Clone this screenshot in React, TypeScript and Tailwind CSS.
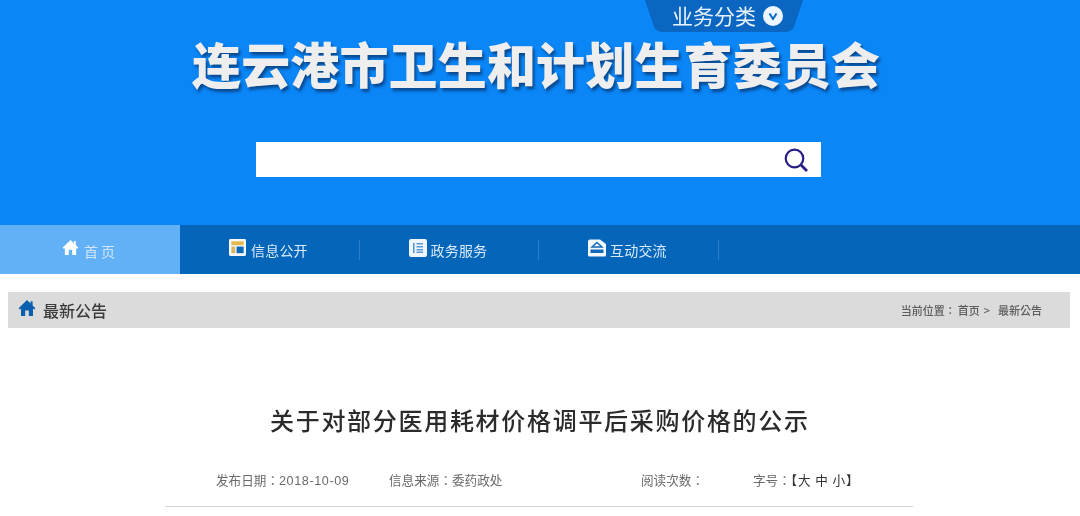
const cjk = "font-['Noto_Sans_CJK_SC','Liberation_Sans',sans-serif]";

function HomeIcon({ className }: { className: string }) {
  return (
    <svg viewBox="0 0 18 18" className={className} fill="currentColor">
      <path d="M9 1 0.6 9.2 1.8 10.4 3 9.4V17H7.2V11.5H10.8V17H15V9.4L16.2 10.4 17.4 9.2 14.6 6.4V2.2H12.6V4.5Z" />
    </svg>
  );
}

function InfoIcon() {
  return (
    <svg viewBox="0 0 18 18" className="h-[19px] w-[17px]">
      <rect x="0" y="0" width="18" height="18" rx="1.5" fill="#f4f8fb" />
      <rect x="2.5" y="2.5" width="13" height="4" fill="#e8b64e" />
      <rect x="2.5" y="8" width="4" height="7" fill="#d9b45c" />
      <rect x="8" y="8" width="7.5" height="7" fill="#0f68b8" />
    </svg>
  );
}

function ServiceIcon() {
  return (
    <svg viewBox="0 0 18 18" className="h-[18px] w-[18px]">
      <rect x="0" y="0" width="18" height="18" rx="2" fill="#eef5fb" />
      <rect x="4" y="4" width="1.6" height="10" fill="#5a9bd6" />
      <path d="M7.5 4H14V5.5H7.5ZM7.5 7H14V8.5H7.5ZM7.5 10H14V11.5H7.5ZM7.5 12.6H14V14H7.5Z" fill="#5a9bd6" />
    </svg>
  );
}

function ChatIcon() {
  return (
    <svg viewBox="0 0 18 18" className="h-[18px] w-[18px]">
      <path d="M2 0.5H12L18 5V16A1.5 1.5 0 0 1 16.5 17.5H1.5A1.5 1.5 0 0 1 0 16V2.5A2 2 0 0 1 2 0.5Z" fill="#f2f7fb" />
      <path d="M9 3.5 14 8H4Z" fill="none" stroke="#0f68b8" strokeWidth="1.4" />
      <rect x="2.5" y="10.5" width="13" height="3.5" fill="#0f68b8" />
    </svg>
  );
}

function NavItem({ icon, label }: { icon: React.ReactNode; label: string }) {
  return (
    <div className="flex w-[178.5px] items-center pl-[49px]">
      <div className="mb-1 flex w-[22px] shrink-0">{icon}</div>
      <span className="mt-[1px] text-[14px] leading-none tracking-[0.2px] text-[#d9ebfa] blur-[0.6px]">{label}</span>
    </div>
  );
}

export default function App() {
  return (
    <div className={`flex h-[516px] w-[1080px] flex-col overflow-hidden bg-white ${cjk}`}>
      {/* Header */}
      <header className="flex h-[225px] shrink-0 flex-col bg-[#0a86f7]">
        <div className="relative ml-[645px] flex h-[32px] w-[158px] items-center pl-[27px]">
          <svg viewBox="0 0 158 32" className="absolute inset-0 h-full w-full">
            <path d="M0 0H158L150 24Q148 32 140 32H18Q10 32 8 24Z" fill="#0b66c2" />
          </svg>
          <span className="relative mb-[2px] text-[21px] leading-none text-[#e8f2fb] blur-[0.5px]">业务分类</span>
          <span className="relative ml-[7px] flex h-5 w-5 items-center justify-center rounded-full bg-[#eef6fd]">
            <svg viewBox="0 0 12 12" className="h-3 w-3" fill="none" stroke="#0b66c2" strokeWidth="2">
              <path d="M2.5 3.5 6 9 9.5 3.5" />
            </svg>
          </span>
        </div>
        <h1 className="mt-[3px] ml-[192px] text-[49px] leading-[56px] font-black tracking-[0.15px] whitespace-nowrap text-[#eeeeee] blur-[0.7px] [text-shadow:2px_3px_3px_#0a4a90]">
          连云港市卫生和计划生育委员会
        </h1>
        <div className="mt-[51px] ml-[256px] flex h-[35px] w-[565px] items-center justify-end bg-white pr-[13px]">
          <svg viewBox="0 0 24 24" className="h-[24px] w-[24px]" fill="none" stroke="#2a1f86" strokeWidth="2.2">
            <circle cx="10.5" cy="10.5" r="8.8" />
            <path d="M17 17 23 23" strokeWidth="2.8" />
          </svg>
        </div>
      </header>

      {/* Nav */}
      <nav className="flex h-[49px] shrink-0 items-center bg-[#0565b9]">
        <div className="flex h-full w-[180px] items-center bg-[#62b0f6] pl-[62px]">
          <HomeIcon className="mb-1 h-[17px] w-[17px] text-white" />
          <span className="mt-[2px] ml-[5px] text-[14px] leading-none tracking-[3px] text-[#cfe6fa] blur-[0.6px]">首页</span>
        </div>
        <NavItem icon={<InfoIcon />} label="信息公开" />
        <div className="h-[20px] w-px bg-[#2a7fc8]" />
        <NavItem icon={<ServiceIcon />} label="政务服务" />
        <div className="h-[20px] w-px bg-[#2a7fc8]" />
        <NavItem icon={<ChatIcon />} label="互动交流" />
        <div className="h-[20px] w-px bg-[#2a7fc8]" />
      </nav>

      {/* Section bar */}
      <div className="mt-[18px] ml-[8px] flex h-[36px] w-[1062px] shrink-0 items-center justify-between bg-[#dcdbdb] pr-[28px] pl-[10px]">
        <div className="flex items-center">
          <HomeIcon className="mb-1 h-[18px] w-[18px] text-[#0b5fae]" />
          <span className="ml-[7px] text-[16px] font-medium text-[#3c3c3c] blur-[0.5px]">最新公告</span>
        </div>
        <div className="flex items-center text-[11px] font-medium whitespace-nowrap text-[#5c5c5c] blur-[0.6px] font-['Noto_Sans_CJK_TC',sans-serif]">
          <span>当前位置：</span>
          <span className="ml-[2px]">首页</span>
          <span className="ml-[4px]">&gt;</span>
          <span className="ml-[8px]">最新公告</span>
        </div>
      </div>

      {/* Article head */}
      <h2 className="mt-[74px] ml-[270px] text-[24px] leading-[36px] font-medium tracking-[1.7px] whitespace-nowrap text-[#2b2b2b] blur-[0.4px]">
        关于对部分医用耗材价格调平后采购价格的公示
      </h2>
      <div className="mt-[33px] ml-[216px] flex text-[12.6px] leading-[18px] whitespace-nowrap text-[#6a6a6a] blur-[0.7px] font-['Noto_Sans_CJK_TC',sans-serif]">
        <span className="w-[173px]">发布日期：<span className="font-['Liberation_Sans'] tracking-[0.6px]">2018-10-09</span></span>
        <span className="w-[252px]">信息来源：委药政处</span>
        <span className="w-[112px]">阅读次数：</span>
        <span>字号：<span className="tracking-[0.9px] text-[#333333]">【大 中 小】</span></span>
      </div>
      <div className="mt-[16px] ml-[165px] h-px w-[748px] shrink-0 bg-[#d5d5d5]" />
    </div>
  );
}
